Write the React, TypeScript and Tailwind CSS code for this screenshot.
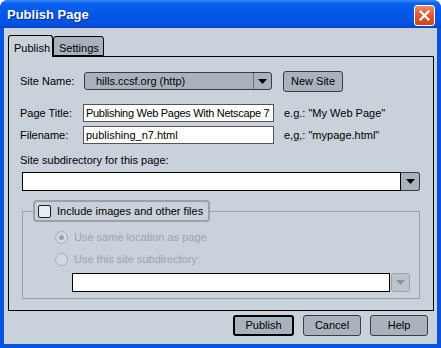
import React from "react";

const font = "font-['Liberation_Sans',Arial,sans-serif]";

const Arrow = ({ color = "#000" }: { color?: string }) => (
    <svg width="9" height="5" viewBox="0 0 9 5">
        <polygon points="0,0 9,0 4.5,5" fill={color} />
    </svg>
);

const Button = ({ label, isDefault, w }: { label: string; isDefault?: boolean; w: string }) => (
    <div
        className={`${w} h-[21px] flex items-center justify-center rounded-[3px] bg-[#a9b3be] text-black ${
            isDefault ? "border-2 border-black" : "border border-[#3c3c3c]"
        }`}
    >
        {label}
    </div>
);

const App: React.FC = () => {
    return (
        <div className={`w-[441px] h-[348px] bg-white ${font} text-[11px] text-black`}>
            <div className="w-full h-full flex flex-col rounded-t-[8px] bg-[#0553e0] overflow-hidden">
                {/* title bar */}
                <div className="h-[28px] flex items-center justify-between pl-[7px] pr-[6px] bg-[linear-gradient(to_bottom,#3b8cf7_0%,#0c61ee_12%,#0557e8_45%,#0454e2_80%,#0346cc_100%)]">
                    <span className="text-white font-bold text-[13px] [text-shadow:1px_1px_0_#0b2a8a] mt-[1px]">
                        Publish Page
                    </span>
                    <div className="w-[21px] h-[21px] mt-[2px] rounded-[3px] border border-white bg-[linear-gradient(to_bottom,#f08a6a,#e35a34_45%,#d2431c)] flex items-center justify-center">
                        <svg width="11" height="11" viewBox="0 0 11 11">
                            <path d="M1.5 1.5 L9.5 9.5 M9.5 1.5 L1.5 9.5" stroke="white" strokeWidth="2.2" strokeLinecap="square" />
                        </svg>
                    </div>
                </div>

                {/* body */}
                <div className="flex-1 mx-[4px] mb-[4px] bg-[#c9d1da] flex flex-col">
                    {/* tabs */}
                    <div className="h-[28px] flex items-end pl-[4px]">
                        <div className="relative z-10 -mb-px w-[45px] h-[22px] border border-b-0 border-black rounded-t-[3px] bg-[#c9d1da] pl-[5px] pt-[4px]">
                            Publish
                        </div>
                        <div className="w-[51px] h-[20px] border border-black rounded-t-[3px] bg-[#a8b2bd] pl-[5px] pt-[3px]">
                            Settings
                        </div>
                    </div>

                    {/* panel */}
                    <div className="ml-[4px] w-[426px] h-[255px] border border-black pt-[15px] pl-[11px]">
                        <div className="h-[18px] flex items-center">
                            <span className="w-[64px]">Site Name:</span>
                            <div className="w-[188px] h-[18px] flex rounded-[3px] border border-[#3c3c3c] bg-[#a9b3be]">
                                <span className="flex-1 pl-[11px] leading-[16px]">hills.ccsf.org (http)</span>
                                <div className="w-[18px] border-l border-[#6c747c] flex items-center justify-center">
                                    <Arrow />
                                </div>
                            </div>
                            <div className="ml-[11px]">
                                <Button label="New Site" w="w-[60px]" />
                            </div>
                        </div>

                        <div className="mt-[14px] h-[18px] flex items-center">
                            <span className="w-[63px]">Page Title:</span>
                            <div className="w-[191px] h-[18px] bg-white border border-[#555] pl-[2px] leading-[16px] whitespace-nowrap overflow-hidden tracking-[-0.3px]">
                                Publishing Web Pages With Netscape 7
                            </div>
                            <span className="ml-[10px]">e.g.: "My Web Page"</span>
                        </div>

                        <div className="mt-[4px] h-[18px] flex items-center">
                            <span className="w-[63px]">Filename:</span>
                            <div className="w-[191px] h-[18px] bg-white border border-[#555] pl-[2px] leading-[16px]">
                                publishing_n7.html
                            </div>
                            <span className="ml-[10px]">e,g,: "mypage.html"</span>
                        </div>

                        <div className="mt-[10px] h-[13px] leading-[13px]">Site subdirectory for this page:</div>

                        <div className="mt-[5px] ml-[2px] w-[398px] h-[19px] flex">
                            <div className="flex-1 bg-white border border-black" />
                            <div className="w-[19px] rounded-r-[3px] border border-l-0 border-[#3c3c3c] bg-[#a9b3be] flex items-center justify-center">
                                <Arrow />
                            </div>
                        </div>

                        <fieldset className="mt-[9px] ml-[2px] w-[398px] border border-[#98a1aa] pb-[6px]">
                            <legend className="ml-[10px] w-[177px] h-[22px] rounded-[4px] border-2 border-[#99a2ab] flex items-center pl-[3px]">
                                <span className="w-[13px] h-[13px] rounded-[2px] border border-[#1f1f1f] bg-[#e6eef0]" />
                                <span className="ml-[6px]">Include images and other files</span>
                            </legend>

                            <div className="pl-[32px] text-[#9ba4ae]">
                                <div className="mt-[8px] h-[14px] flex items-center">
                                    <span className="w-[13px] h-[13px] rounded-full border border-[#a3abb3] bg-[#d3d9df] flex items-center justify-center">
                                        <span className="w-[5px] h-[5px] rounded-full bg-[#9aa3ad]" />
                                    </span>
                                    <span className="ml-[6px]">Use same location as page</span>
                                </div>
                                <div className="mt-[8px] h-[14px] flex items-center">
                                    <span className="w-[13px] h-[13px] rounded-full border border-[#a3abb3] bg-[#d3d9df]" />
                                    <span className="ml-[6px]">Use this site subdirectory:</span>
                                </div>

                                <div className="mt-[7px] ml-[17px] w-[338px] h-[19px] flex">
                                    <div className="flex-1 bg-white border border-black" />
                                    <div className="w-[19px] ml-[1px] rounded-[3px] border border-[#9aa3ac] bg-[#bcc4cc] flex items-center justify-center">
                                        <Arrow color="#8c959e" />
                                    </div>
                                </div>
                            </div>
                        </fieldset>
                    </div>

                    {/* buttons */}
                    <div className="mt-[4px] flex justify-end gap-[9px] pr-[9px]">
                        <Button label="Publish" isDefault w="w-[61px]" />
                        <Button label="Cancel" w="w-[58px]" />
                        <Button label="Help" w="w-[58px]" />
                    </div>
                </div>
            </div>
        </div>
    );
};

export default App;
